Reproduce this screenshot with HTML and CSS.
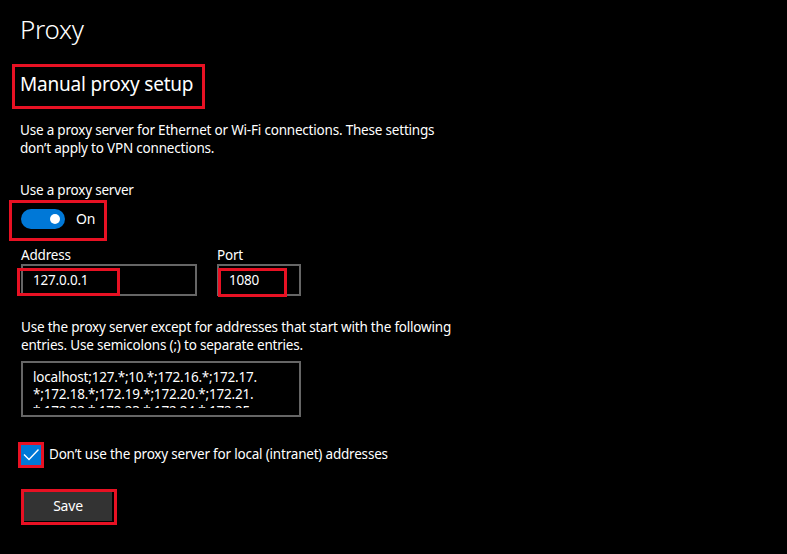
FILE: index.html
```html
<!DOCTYPE html>
<html lang="en">
<head>
<meta charset="utf-8">
<title>Proxy</title>
<link rel="stylesheet" href="styles.css">
</head>
<body>
<div class="page">
  <h1 class="title">Proxy</h1>
  <h2 class="section mark">Manual proxy setup</h2>
  <p class="desc first">Use a proxy server for Ethernet or Wi-Fi connections. These settings<br>don’t apply to VPN connections.</p>
  <div class="label proxy-label">Use a proxy server</div>
  <div class="toggle-row mark">
    <span class="toggle"><span class="knob"></span></span>
    <span class="toggle-text">On</span>
  </div>
  <div class="fields">
    <div class="field">
      <div class="label">Address</div>
      <div class="input addr">127.0.0.1<span class="hl hl-addr"></span></div>
    </div>
    <div class="field">
      <div class="label">Port</div>
      <div class="input port">1080<span class="hl hl-port"></span></div>
    </div>
  </div>
  <p class="desc second">Use the proxy server except for addresses that start with the following<br>entries. Use semicolons (;) to separate entries.</p>
  <div class="textarea">
    <div class="textarea-inner">localhost;127.*;10.*;172.16.*;172.17.<br>*;172.18.*;172.19.*;172.20.*;172.21.<br>*;172.22.*;172.23.*;172.24.*;172.25.</div>
  </div>
  <div class="check-row">
    <span class="check mark">
      <span class="check-box">
        <svg width="20" height="20" viewBox="0 0 20 20"><path d="M3 9.5 L8 14.5 L17.5 4.5" fill="none" stroke="#fff" stroke-width="1.4"/></svg>
      </span>
    </span>
    <span class="check-text">Don’t use the proxy server for local (intranet) addresses</span>
  </div>
  <div class="save-wrap mark">
    <button class="save">Save</button>
  </div>
</div>
</body>
</html>
```

FILE: styles.css
```css
html, body {
  margin: 0;
  padding: 0;
  background: #000;
}
body {
  color: #fff;
  font-family: "Noto Sans", "Open Sans", sans-serif;
  font-size: 13.5px;
  letter-spacing: -0.2px;
  line-height: 18px;
  width: 787px;
  height: 554px;
  overflow: hidden;
}
.page {
  display: flex;
  flex-direction: column;
  align-items: flex-start;
  padding-left: 20px;
}
.mark {
  border: 3px solid #e81123;
}
.title {
  margin: 11px 0 0 0;
  font-size: 26px;
  font-weight: 300;
  letter-spacing: -0.3px;
  line-height: 36px;
}
.section {
  margin: 17px 0 0 -8px;
  font-size: 19px;
  font-weight: 400;
  letter-spacing: -0.2px;
  line-height: 28px;
  padding: 3px 9px 8px 5px;
}
.desc {
  margin: 0;
}
.desc.first {
  margin-top: 12px;
}
.label {
  line-height: 18px;
}
.proxy-label {
  margin-top: 24px;
}
.toggle-row {
  margin: 1px 0 0 -11px;
  display: flex;
  align-items: center;
  padding: 6px 9px 9px 9px;
}
.toggle {
  width: 44px;
  height: 20px;
  border-radius: 10px;
  background: #0078d7;
  display: flex;
  align-items: center;
  justify-content: flex-end;
  padding-right: 5px;
  box-sizing: border-box;
}
.knob {
  width: 10px;
  height: 10px;
  border-radius: 50%;
  background: #fff;
}
.toggle-text {
  margin-left: 11px;
  font-size: 14px;
}
.fields {
  display: flex;
  gap: 20px;
  margin-top: 5px;
  margin-left: 1px;
}
.field {
  display: flex;
  flex-direction: column;
}
.input {
  position: relative;
  height: 32px;
  box-sizing: border-box;
  border: 2px solid #666;
  padding: 4px 0 0 10px;
  line-height: 20px;
}
.input.addr {
  width: 176px;
}
.input.port {
  width: 84px;
}
.hl {
  position: absolute;
  border: 3px solid #e81123;
  box-sizing: border-box;
}
.hl-addr {
  left: -6px;
  top: 2px;
  width: 103px;
  height: 28px;
}
.hl-port {
  left: -1px;
  top: 2px;
  width: 69px;
  height: 29px;
}
.desc.second {
  margin-top: 22px;
  margin-left: 1px;
}
.textarea {
  margin-top: 7px;
  margin-left: 1px;
  width: 280px;
  box-sizing: border-box;
  border: 2px solid #666;
  padding: 6px 8px 7px 10px;
}
.textarea-inner {
  height: 39px;
  overflow: hidden;
  line-height: 17px;
}
.check-row {
  display: flex;
  align-items: center;
  margin-top: 25px;
  margin-left: -2px;
}
.check {
  display: block;
  width: 20px;
  height: 20px;
}
.check-box {
  display: block;
  width: 20px;
  height: 20px;
  background: #0078d7;
}
.check-box svg {
  display: block;
}
.check-text {
  margin-left: 5px;
  margin-top: -3px;
}
.save-wrap {
  margin-top: 21px;
  margin-left: 1px;
  padding: 0 2px 1px 0;
}
.save {
  display: block;
  width: 88px;
  height: 29px;
  border: 0;
  margin: 0;
  background: #333;
  color: #fff;
  font-family: "Noto Sans", "Open Sans", sans-serif;
  font-size: 14px;
  letter-spacing: -0.2px;
  padding: 0 0 2px 0;
}
```
